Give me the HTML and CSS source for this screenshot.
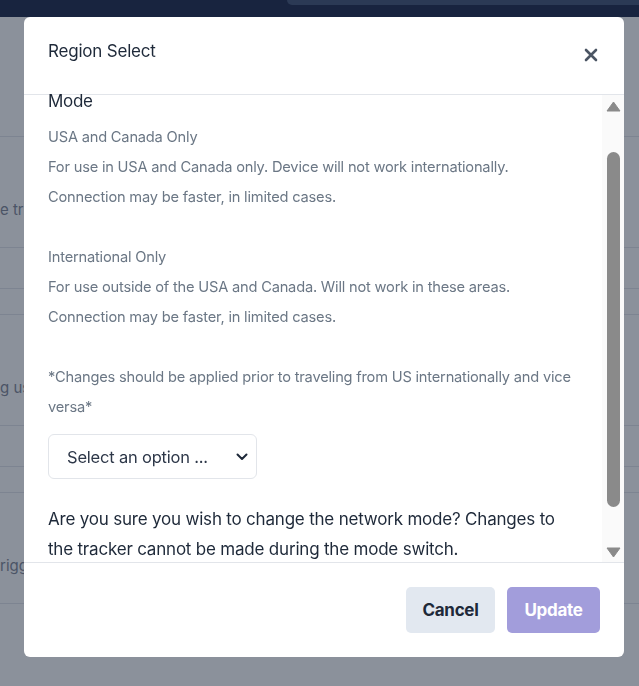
FILE: index.html
```html
<!DOCTYPE html>
<html>
<head>
<meta charset="utf-8">
<link rel="stylesheet" href="styles.css">
</head>
<body>
<div class="page">
  <div class="topbar"><div class="search"></div></div>
  <div class="rows">
    <div class="row tall"><span>e tri</span></div>
    <div class="row mid"></div>
    <div class="row short"></div>
    <div class="row tall"><span>g us</span></div>
    <div class="row mid"></div>
    <div class="row short"></div>
    <div class="row tall"><span>rigg</span></div>
    <div class="row mid"></div>
  </div>
</div>
<div class="overlay"></div>
<div class="modal">
  <div class="modal-header">
    <h2 class="title">Region Select</h2>
    <svg class="close" width="14" height="14" viewBox="0 0 14 14"><path d="M2 2L12 12M12 2L2 12" stroke="#4b5563" stroke-width="2.6" stroke-linecap="round"/></svg>
  </div>
  <div class="modal-body">
    <div class="content">
      <div class="label">Mode</div>
      <p class="note">USA and Canada Only<br>For use in USA and Canada only. Device will not work internationally.<br>Connection may be faster, in limited cases.</p>
      <p class="note">International Only<br>For use outside of the USA and Canada. Will not work in these areas.<br>Connection may be faster, in limited cases.</p>
      <p class="note">*Changes should be applied prior to traveling from US internationally and vice versa*</p>
      <div class="select">
        <span>Select an option ...</span>
        <svg width="12" height="8" viewBox="0 0 12 8"><path d="M1.5 1.5L6 6L10.5 1.5" fill="none" stroke="#1e2939" stroke-width="2" stroke-linecap="round" stroke-linejoin="round"/></svg>
      </div>
      <p class="confirm">Are you sure you wish to change the network mode? Changes to the tracker cannot be made during the mode switch.</p>
    </div>
    <div class="scrollbar">
      <svg class="arrow" width="15" height="11" viewBox="0 0 15 11"><path d="M7.5 1L14 10H1Z" fill="#8a8a8a" stroke="#8a8a8a" stroke-linejoin="round"/></svg>
      <div class="track"><div class="thumb"></div></div>
      <svg class="arrow" width="15" height="11" viewBox="0 0 15 11"><path d="M7.5 10L14 1H1Z" fill="#8a8a8a" stroke="#8a8a8a" stroke-linejoin="round"/></svg>
    </div>
  </div>
  <div class="modal-footer">
    <button class="btn cancel">Cancel</button>
    <button class="btn update">Update</button>
  </div>
</div>
</body>
</html>
```
FILE: styles.css
```css
* { box-sizing: border-box; }
html, body { margin: 0; padding: 0; }
body {
  width: 639px;
  height: 686px;
  overflow: hidden;
  font-family: Inter, "Liberation Sans", sans-serif;
  background: #ffffff;
}
.page { width: 639px; height: 686px; overflow: hidden; }
.topbar {
  height: 17px;
  background: #182446;
  position: relative;
  overflow: hidden;
}
.search {
  position: absolute;
  left: 287px;
  right: 0;
  top: 0;
  height: 5px;
  background: #3e5072;
  border-radius: 0 0 0 6px;
}
.rows { padding-top: 119px; }
.row {
  border-top: 1px solid #e2e5ea;
  display: flex;
  align-items: center;
  font-size: 15px;
  color: #7e8594;
  white-space: nowrap;
  overflow: hidden;
}
.row.tall { height: 111px; padding-top: 34px; }
.row.mid { height: 41px; }
.row.short { height: 26px; }
.overlay {
  position: fixed;
  inset: 0;
  background: rgba(24, 36, 56, 0.5);
}
.modal {
  position: fixed;
  left: 24px;
  top: 17px;
  width: 600px;
  height: 640px;
  background: #fff;
  border-radius: 6px;
  display: flex;
  flex-direction: column;
  overflow: hidden;
}
.modal-header {
  height: 78px;
  flex: none;
  border-bottom: 1px solid #e2e5ea;
  display: flex;
  align-items: flex-start;
  justify-content: space-between;
  padding: 24px 26px 0 24px;
}
.title {
  margin: 0;
  font-size: 17px;
  font-weight: 400;
  color: #1e2939;
  letter-spacing: -0.2px;
}
.close { margin-top: 7px; }
.modal-body {
  flex: 1;
  min-height: 0;
  display: flex;
  border-bottom: 1px solid #e2e5ea;
}
.content {
  flex: 1;
  padding: 0 24px;
}
.label {
  font-size: 17px;
  color: #1e2939;
  line-height: 17px;
  margin-top: -2px;
  letter-spacing: -0.3px;
}
.note {
  margin: 12px 0 30px;
  font-size: 14.65px;
  line-height: 30px;
  color: #6b7785;
  letter-spacing: -0.2px;
}
.note + .note { margin-top: 0; }
.note:nth-of-type(3) { margin-bottom: 12px; }
.select {
  width: 209px;
  height: 45px;
  border: 1px solid #e2e5ea;
  border-radius: 6px;
  display: flex;
  align-items: center;
  justify-content: space-between;
  padding: 0 8px 0 18px;
  font-size: 16.5px;
  color: #2d3748;
  letter-spacing: -0.2px;
}
.confirm {
  margin: 25px 0 0;
  font-size: 17px;
  line-height: 30px;
  color: #1e2939;
  letter-spacing: -0.2px;
}
.scrollbar {
  width: 22px;
  flex: none;
  background: #fafafa;
  display: flex;
  flex-direction: column;
  align-items: center;
  padding: 6px 0 4px;
}
.arrow { flex: none; display: block; }
.track {
  flex: 1;
  width: 13px;
  padding: 40px 0 40px;
  display: flex;
}
.thumb {
  flex: 1;
  background: #8a8a8a;
  border-radius: 7px;
}
.modal-footer {
  height: 94px;
  flex: none;
  display: flex;
  justify-content: flex-end;
  align-items: center;
  gap: 12px;
  padding: 0 24px 0 0;
}
.btn {
  height: 46px;
  border: none;
  border-radius: 5px;
  font-family: inherit;
  font-size: 17px;
  font-weight: 700;
  letter-spacing: -0.3px;
  padding: 0 16px;
}
.cancel { background: #e2e8f0; color: #1e2939; width: 89px; }
.update { background: #a29ddb; color: #fff; width: 93px; }
```
